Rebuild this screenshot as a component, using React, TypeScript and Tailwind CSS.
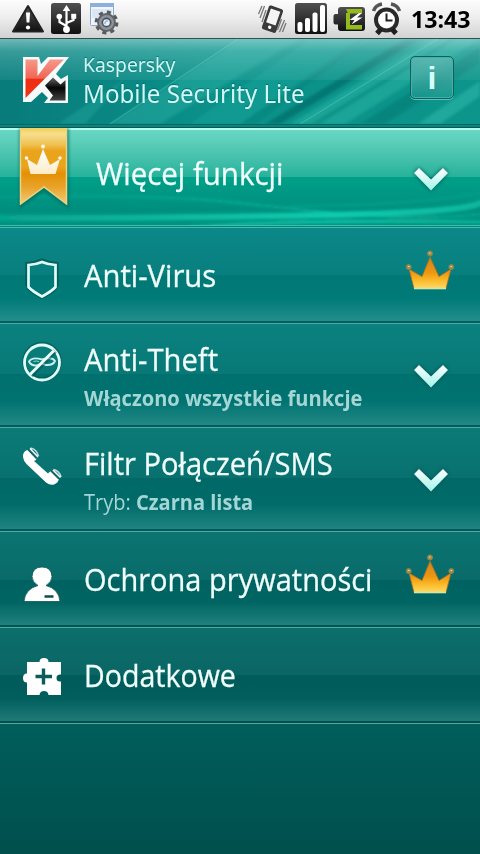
import React from "react";

const SANS = "font-['Open_Sans','Noto_Sans',sans-serif]";

function StatusBar() {
  return (
    <div className="flex h-[39px] shrink-0 items-start border-b border-[#33504f] bg-linear-to-b from-[#fdfdfd] via-[#ececec] to-[#d2d2d2]">
      <svg width="480" height="38" viewBox="0 0 480 38" className="-mr-[69px] shrink-0">
        <defs>
          <linearGradient id="dark" x1="0" y1="0" x2="0" y2="1">
            <stop offset="0" stopColor="#505050" />
            <stop offset="1" stopColor="#101010" />
          </linearGradient>
        </defs>
        <path d="M28 6 L43 31.5 H13 Z" fill="url(#dark)" stroke="#222" strokeWidth="2" strokeLinejoin="round" />
        <path d="M26 12.5h4l-.6 10h-2.8z" fill="#fff" />
        <circle cx="28" cy="27.5" r="2.1" fill="#fff" />

        <rect x="51" y="3" width="30" height="31" rx="2.5" fill="url(#dark)" />
        <g stroke="#fff" strokeWidth="2.2" fill="none">
          <path d="M66.5 8V28M66.5 26 L59.5 22V17M66.5 23 L73.5 20V16" />
        </g>
        <path d="M66.5 5l3.8 6h-7.6z" fill="#fff" />
        <circle cx="66.5" cy="29.5" r="3.4" fill="#fff" />
        <circle cx="59.3" cy="16.5" r="2.8" fill="#fff" />
        <rect x="71.2" y="13.8" width="5" height="5" fill="#fff" />

        <rect x="90.5" y="3.5" width="23" height="22" rx="1" fill="#f1f5fa" stroke="#8aa9cd" />
        <path d="M90 3h24v4H90z" fill="#8db0da" />
        <path d="M92 9h20v9H92z" fill="#dde7f4" />
        <circle cx="106.500" cy="22.500" r="10.300" fill="none" stroke="#565a5f" strokeWidth="3.200" strokeDasharray="4.050 4.040" />
        <circle cx="106.500" cy="22.500" r="6.700" fill="none" stroke="#5f6368" strokeWidth="5.400" />
        <circle cx="106.500" cy="22.500" r="6.300" fill="none" stroke="#8f9397" strokeWidth="2.400" />
        <circle cx="106.500" cy="22.500" r="4" fill="#e6eef6" stroke="#45505c" strokeWidth="1.300" />
        <path d="M105 24a2.400 2.400 0 0 1 3-3" fill="none" stroke="#7eb2e6" strokeWidth="1.300" />

        <g transform="rotate(19 272 19)">
          <rect x="265" y="6.500" width="15" height="25" rx="2" fill="#3a3a3a" />
          <rect x="267.500" y="9.500" width="10" height="14.500" fill="#f4f4f4" />
          <circle cx="272.500" cy="27.600" r="1.700" fill="#fff" />
        </g>
        <g stroke="#777" strokeWidth="1.300">
          <path d="M264.500 6l-4.500 12M262 6l-3.500 8M266 10l-4 12M284.500 20l-5 12M286 23l-3.500 9M281.500 19l-4 11" />
        </g>

        <rect x="295" y="3" width="32" height="31" rx="2.500" fill="url(#dark)" />
        <g fill="#fff">
          <rect x="297.500" y="22" width="5" height="10" rx="2" />
          <rect x="305" y="18" width="5" height="14" rx="2" />
          <rect x="312.500" y="12.500" width="5" height="19.500" rx="2" />
          <rect x="320" y="5" width="5" height="27" rx="2" />
        </g>

        <path d="M341 7h21a3 3 0 0 1 3 3v18a3 3 0 0 1-3 3h-21a3 3 0 0 1-3-3v-3.500h-2.500a2 2 0 0 1-2-2v-6.500a2 2 0 0 1 2-2H338V10a3 3 0 0 1 3-3z" fill="url(#dark)" />
        <path d="M346 9h16v4.500h-14zM346 25h16v4.500h-16zM346 13h4v12h-4z" fill="#94bb1e" />
        <path d="M359 13l-9.500 7h5l-3 4.500 11-7h-5.500l5-4.500z" fill="#fff" />

        <circle cx="386.500" cy="20" r="10.500" fill="#fff" stroke="#292929" strokeWidth="4" />
        <path d="M386.500 13.500v7h6" stroke="#222" strokeWidth="2" fill="none" />
        <path d="M373.500 11q2-6 8.500-7M399.500 11q-2-6-8.500-7" stroke="#555" strokeWidth="3.600" fill="none" />
        <path d="M377 33.500l4-4.500M396 33.500l-4-4.500" stroke="#202020" strokeWidth="5" />
      </svg>
      <span className={`${SANS} z-10 origin-left scale-x-[0.965] pt-[2px] text-[24px] leading-[34px] font-bold text-black`}>13:43</span>
    </div>
  );
}

function Header() {
  return (
    <header className="relative flex h-[85px] shrink-0 overflow-hidden bg-[#078782]">
      <svg className="absolute inset-0" width="480" height="85" viewBox="0 0 480 85">
        <defs>
          <linearGradient id="hd" x1="0" y1="0" x2="1" y2="0">
            <stop offset="0" stopColor="#087b7b" />
            <stop offset=".45" stopColor="#0a918a" />
            <stop offset="1" stopColor="#0c958a" />
          </linearGradient>
          <linearGradient id="hg" x1="0" y1="0" x2="0" y2="1">
            <stop offset="0" stopColor="#b5e2e1" stopOpacity=".6" />
            <stop offset=".3" stopColor="#90d5d2" stopOpacity=".35" />
            <stop offset="1" stopColor="#79ccc5" stopOpacity=".12" />
          </linearGradient>
          <filter id="soft"><feGaussianBlur stdDeviation="1.700" /></filter>
        </defs>
        <rect width="480" height="85" fill="url(#hd)" />
        <g filter="url(#soft)">
          <path d="M110 85L240 0h60L160 85z" fill="#30b6a8" opacity=".36" />
          <path d="M190 85L310 0h60L240 85z" fill="#20ab9d" opacity=".34" />
          <path d="M265 85L405 0h15L280 85z" fill="#006c69" opacity=".7" />
          <path d="M240 85L360 0h7L256 85z" fill="#006c69" opacity=".25" />
          <path d="M290 85L430 0h50L345 85z" fill="#2cbdad" opacity=".4" />
          <path d="M310 85L450 0h7L320 85z" fill="#007a75" opacity=".4" />
          <path d="M360 85L480 8V24L385 85z" fill="#00736e" opacity=".45" />
          <path d="M58 85L125 40 85 85z" fill="#30b6a8" opacity=".3" />
          <path d="M418 85L480 42V57L440 85z" fill="#31bbae" opacity=".5" />
        </g>
        <path d="M238 0L110 85M438 0L300 85" stroke="#7bd8cd" strokeWidth="1.200" opacity=".3" />
        <rect width="480" height="41" fill="url(#hg)" />
      </svg>
      <svg className="relative mt-[17px] ml-[22px] shrink-0" width="48" height="50" viewBox="0 0 48 50">
        <defs>
          <linearGradient id="kr" x1="0" y1="0" x2="0" y2="1">
            <stop offset="0" stopColor="#f7998b" />
            <stop offset=".48" stopColor="#ef6654" />
            <stop offset=".52" stopColor="#ee2c13" />
            <stop offset="1" stopColor="#f03517" />
          </linearGradient>
          <linearGradient id="kb" x1="0" y1="0" x2="0" y2="1">
            <stop offset="0" stopColor="#666" />
            <stop offset=".45" stopColor="#050505" />
            <stop offset="1" stopColor="#444" />
          </linearGradient>
        </defs>
        <path d="M1 1H17L19 8 26 1H47L34 18 39 23 46 19V47H22L26 42 20 36 9 46H1Z" fill="#fff" opacity=".96" />
        <path d="M3.500 3.500H15.500V20L28 3.500H42L3.500 42Z" fill="url(#kr)" />
        <path d="M23 29.500L31 21.500 38.500 28.500 43.500 24V44.500H27.500L31 39.500Z" fill="url(#kb)" />
      </svg>
      <div className="relative ml-[13px] w-[327px] whitespace-nowrap font-['Noto_Sans','Open_Sans',sans-serif] text-[#d0f8f6] [text-shadow:0_-1px_1px_#02706d]">
        <div className="mt-[12px] origin-left scale-x-[0.966] text-[20px] leading-[28px]">Kaspersky</div>
        <div className="origin-left scale-x-[0.965] text-[25px] leading-[28px]">Mobile Security Lite</div>
      </div>
      <div className="relative mt-[17px] flex h-[43px] w-[44px] shrink-0 items-center justify-center rounded-[5px] border border-[#08635f] bg-linear-to-b from-[#5fb8b3]/80 to-[#199b91]/70 shadow-[0_1px_0_#5dc2b9,inset_0_0_0_1px_#4aaea8]">
        <span className="font-['Liberation_Sans',sans-serif] text-[32px] leading-none font-bold text-[#d6fffb]">i</span>
      </div>
    </header>
  );
}

function Chevron() {
  return (
    <svg width="40" height="32" viewBox="0 0 40 32" className="shrink-0 drop-shadow-[0_0_2px_#055]">
      <defs>
        <linearGradient id="ch" x1="0" y1="0" x2="0" y2="1">
          <stop offset="0" stopColor="#fff" />
          <stop offset="1" stopColor="#9ff4e9" />
        </linearGradient>
      </defs>
      <path d="M3 11L8 6 20 17.500 32 6 37 11 20 28.500Z" fill="url(#ch)" />
    </svg>
  );
}

function Crown() {
  return (
    <svg width="50" height="42" viewBox="0 0 50 42" className="shrink-0">
      <defs>
        <linearGradient id="cr" x1="0" y1="0" x2="0" y2="1">
          <stop offset="0" stopColor="#c98524" />
          <stop offset=".5" stopColor="#f0960f" />
          <stop offset=".78" stopColor="#fbbf30" />
          <stop offset="1" stopColor="#fbd968" />
        </linearGradient>
      </defs>
      <path d="M9 39.500L4 20 17 27.500 25 8 34 27.500 46 20 41 39.500Z" fill="url(#cr)" stroke="#997027" strokeWidth=".8" />
      <path d="M9 39.500H41" stroke="#d5e5a4" strokeWidth="1.600" />
      <g fill="#b88938" stroke="#718a60" strokeWidth="1">
        <circle cx="25" cy="4.500" r="2.600" />
        <circle cx="3.700" cy="18" r="2.500" />
        <circle cx="46.300" cy="18" r="2.500" />
      </g>
      <path d="M24 4h1.500M3 17.500h1.500M45.500 17.500H47" stroke="#e8d5a0" />
    </svg>
  );
}

function Promo() {
  return (
    <div className="relative flex h-[100px] shrink-0 bg-linear-to-b from-[#6cd9c5] from-0% via-[#2ab49e] via-46% to-[#008d7d] to-100%">
      <svg className="absolute inset-0" width="480" height="100" viewBox="0 0 480 100" preserveAspectRatio="none">
        <defs>
          <linearGradient id="pb" x1="0" y1="0" x2="0" y2="1">
            <stop offset="0" stopColor="#00a088" />
            <stop offset=".65" stopColor="#008f7f" />
            <stop offset="1" stopColor="#00927f" />
          </linearGradient>
          <linearGradient id="pw" gradientUnits="userSpaceOnUse" x1="0" y1="0" x2="480" y2="0">
            <stop offset="0" stopColor="#06a48f" />
            <stop offset=".7" stopColor="#10cdb0" />
            <stop offset="1" stopColor="#0cb79e" />
          </linearGradient>
          <filter id="ps" x="-5%" y="-50%" width="110%" height="200%"><feGaussianBlur stdDeviation="1.800" /></filter>
        </defs>
        <rect y="49" width="480" height="49" fill="url(#pb)" />
        <g filter="url(#ps)" fill="none" stroke="url(#pw)">
          <path d="M-5 90Q170 90 330 87T485 70" strokeWidth="6" />
          <path d="M-5 69Q160 66 230 74T360 87T485 86" strokeWidth="2" opacity=".6" />
          <path d="M190 99Q300 91 485 94" strokeWidth="2.500" />
          <path d="M290 78Q420 78 485 64" strokeWidth="2" opacity=".3" />
        </g>
        <path d="M0 1H480" stroke="#b2fff0" strokeWidth="2" />
        <path d="M0 97.500H480M0 99.500H480" stroke="#42bcae" />
        <path d="M0 98.500H480" stroke="#078476" />
      </svg>
      <svg className="relative ml-[16px] shrink-0" width="56" height="90" viewBox="0 0 56 90">
        <defs>
          <linearGradient id="rb" x1="0" y1="0" x2="0" y2="1">
            <stop offset="0" stopColor="#f3cf4c" />
            <stop offset=".08" stopColor="#f6df90" />
            <stop offset=".22" stopColor="#efc050" />
            <stop offset=".3" stopColor="#e9a41c" />
            <stop offset=".5" stopColor="#eaa51e" />
            <stop offset=".6" stopColor="#e49005" />
            <stop offset=".78" stopColor="#e9a32a" />
            <stop offset="1" stopColor="#f3cb78" />
          </linearGradient>
          <linearGradient id="wc" x1="0" y1="0" x2="0" y2="1">
            <stop offset="0" stopColor="#fff" />
            <stop offset="1" stopColor="#fdecc9" />
          </linearGradient>
          <filter id="rs"><feGaussianBlur stdDeviation="1.700" /></filter>
        </defs>
        <path d="M3 0H53V81L28 64 3 81Z" fill="#03695c" opacity=".65" filter="url(#rs)" />
        <path d="M4.500 0V76L28 59 50.500 76V0Z" fill="url(#rb)" stroke="#ead483" strokeWidth="1.500" />
        <path d="M14.500 46L11 31 21 37 27 21 34 37 44 31 39.500 46Z" fill="url(#wc)" />
        <g fill="#fff8e8">
          <circle cx="27" cy="18.500" r="1.900" />
          <circle cx="10.500" cy="30" r="1.800" />
          <circle cx="44" cy="30" r="1.800" />
        </g>
      </svg>
      <div className={`${SANS} relative ml-[24px] w-[315px] origin-left scale-x-[0.95] pt-[24px] text-[31px] leading-[42px] whitespace-nowrap text-[#f0fffd] [-webkit-text-stroke:0.3px_#f0fffd]`}>Więcej funkcji</div>
      <div className="relative pt-[34px]"><Chevron /></div>
    </div>
  );
}

const icons = {
  shield: (
    <svg width="42" height="42" viewBox="0 0 42 42">
      <path d="M21 2.500Q27 5.500 35.500 6V27Q34 33 21 38.500 8 33 6.500 27V6Q15 5.500 21 2.500Z" fill="none" stroke="#07504f" strokeWidth="4.500" opacity=".65" />
      <path d="M21 4Q27 6.500 34.500 7V29Q31 33 21 38.500 11 33 7.500 29V7Q15 6.500 21 4Z" fill="none" stroke="#dffffb" strokeWidth="2.700" />
    </svg>
  ),
  theft: (
    <svg width="42" height="42" viewBox="0 0 42 42">
      <circle cx="21" cy="20.500" r="17.700" fill="none" stroke="#07504f" strokeWidth="4" opacity=".55" />
      <circle cx="21" cy="21.500" r="17.500" fill="none" stroke="#dffffb" strokeWidth="2.800" />
      <path d="M8 20.500Q11 15.500 21 18.500 31 15.500 34 20 32 24.500 25 24L21 22.500 16 24.500Q10 25 8 20.500Z" fill="none" stroke="#c7efed" strokeWidth="1.900" />
      <path d="M12.500 20.500Q15 19.500 18 20.500" fill="none" stroke="#94d4d0" />
      <path d="M10 34.500L34 10" stroke="#07504f" strokeWidth="5" opacity=".5" />
      <path d="M9 33.500L33 9.500" stroke="#edfffd" strokeWidth="2.800" />
    </svg>
  ),
  phone: (
    <svg width="42" height="42" viewBox="0 0 42 42">
      <path d="M2 12Q1.500 8 5 5.500L7 5 15.500 13 15 15 13 16 27 28.500 29 26.500 31 26.500 38 34Q37 38 33 39.500 29 40.500 25 37.500L5.500 19Q2.500 16 2 12Z" fill="#fff" />
      <path d="M7 4.500L15.500 13.500M30 26L38 34" stroke="#12605d" strokeWidth="1.500" />
      <path d="M9.500 3Q15.500 4 17.500 11M32.500 24.500Q38.500 26 40 32" fill="none" stroke="#b9dedb" strokeWidth="1.600" />
      <path d="M9 3.500L17 12M32 25L39.500 32.500" stroke="#fff" strokeWidth="1.500" />
    </svg>
  ),
  person: (
    <svg width="42" height="42" viewBox="0 0 42 42">
      <path d="M17 22.500Q11 19 11 13.500 11.500 4 21 4 30.500 4 31 13.500 31 19 25 22.500 38 26 39 38.500H3Q4 26 17 22.500Z" fill="#fff" stroke="#095655" strokeWidth=".8" />
      <path d="M23.500 33.500H32.500" stroke="#0c4e4d" strokeWidth="2.500" />
    </svg>
  ),
  puzzle: (
    <svg width="42" height="42" viewBox="0 0 42 42">
      <path d="M6 6H18.500Q18.500 2 23 2 27.500 2 27.500 6H40V18.500Q35.500 18 35.500 22 35.500 26 40 25.500V39H27.500Q27 35 23 35 19 35 18.500 39H6V26.500Q2 26.500 2 22 2 17.500 6 17.500Z" fill="#fff" />
      <path d="M22.500 12.500V28.500M14.500 20.500H31" stroke="#0b5c5b" strokeWidth="3.400" />
    </svg>
  ),
};

interface RowProps {
  icon: React.ReactNode;
  iconClass: string;
  title: string;
  titleClass: string;
  sub?: React.ReactNode;
  right?: React.ReactNode;
  className: string;
}

function Row({ icon, iconClass, title, titleClass, sub, right, className }: RowProps) {
  return (
    <div className={`flex shrink-0 border-b border-[#4faaa6] ${className}`}>
      <div className={`ml-[21px] w-[63px] shrink-0 ${iconClass}`}>{icon}</div>
      <div className={`${SANS} w-[320px] shrink-0 whitespace-nowrap`}>
        <div className={`origin-left text-[31px] leading-[42px] text-[#f0fffd] [-webkit-text-stroke:0.3px_#f0fffd] ${titleClass}`}>{title}</div>
        {sub}
      </div>
      {right}
    </div>
  );
}

export default function App() {
  return (
    <main className="flex h-[854px] w-[480px] flex-col overflow-hidden bg-[#005754]">
      <StatusBar />
      <Header />
      <div className="h-[4px] shrink-0 bg-linear-to-b from-[#006963] from-25% via-[#23a198] via-50% to-[#005d59] to-75%" />
      <Promo />
      <Row
        icon={icons.shield}
        iconClass="pt-[30px]"
        title="Anti-Virus"
        titleClass="mt-[26px] scale-x-[0.943]"
        right={<div className="ml-[1px] pt-[21px]"><Crown /></div>}
        className="h-[96px] bg-[linear-gradient(to_bottom,#0b8888_0,#087f7e_47px,#007876_47px,#007a78_70px,#228e8b_93px,#00605f_93px,#00605f_95px)]"
      />
      <Row
        icon={icons.theft}
        iconClass="pt-[17px]"
        title="Anti-Theft"
        titleClass="mt-[14px] scale-x-[0.941]"
        sub={<div className="mt-px origin-left scale-x-[0.955] text-[21px] leading-[34px] font-bold text-[#a3d6d4]">Włączono wszystkie funkcje</div>}
        right={<div className="ml-[7px] pt-[35px]"><Chevron /></div>}
        className="h-[104px] bg-[linear-gradient(to_bottom,#0b8280_0,#087876_50px,#00706e_50px,#007270_76px,#218886_101px,#005d5b_101px,#005d5b_103px)]"
      />
      <Row
        icon={icons.phone}
        iconClass="pt-[17px]"
        title="Filtr Połączeń/SMS"
        titleClass="mt-[14px] scale-x-[0.939]"
        sub={<div className="mt-px origin-left scale-x-[0.954] text-[21px] leading-[34px] text-[#a3d6d4]">Tryb: <b>Czarna lista</b></div>}
        right={<div className="ml-[7px] pt-[35px]"><Chevron /></div>}
        className="h-[104px] bg-[linear-gradient(to_bottom,#0b7b78_0,#08716f_50px,#006967_50px,#006b69_76px,#208481_101px,#005957_101px,#005957_103px)]"
      />
      <Row
        icon={icons.person}
        iconClass="pt-[31px]"
        title="Ochrona prywatności"
        titleClass="mt-[26px] scale-x-[0.936]"
        right={<div className="ml-[1px] pt-[21px]"><Crown /></div>}
        className="h-[96px] bg-[linear-gradient(to_bottom,#0b7471_0,#096b69_48px,#006260_48px,#006562_70px,#20807c_93px,#005452_93px,#005452_95px)]"
      />
      <Row
        icon={icons.puzzle}
        iconClass="pt-[28px]"
        title="Dodatkowe"
        titleClass="mt-[26px] scale-x-[0.922]"
        className="h-[96px] bg-[linear-gradient(to_bottom,#0c6e6b_0,#0a6664_47px,#005b59_47px,#005e5c_70px,#207a78_93px,#004f4d_93px,#004f4d_95px)]"
      />
      <div className="flex-1 bg-linear-to-b from-[#005e5b] to-[#004f4d]" />
    </main>
  );
}
